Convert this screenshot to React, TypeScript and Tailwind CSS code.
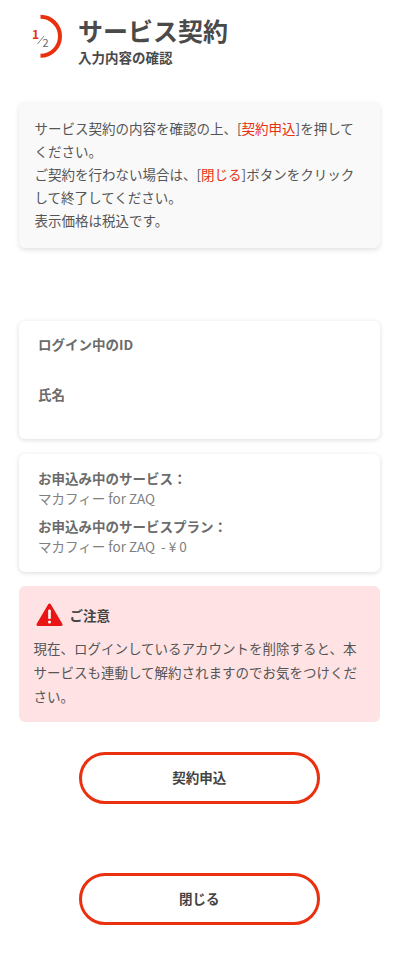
export default function App() {
  return (
    <div className="w-[400px] h-[967px] bg-white text-[#555] font-['Noto_Sans_CJK_JP','Noto_Sans',sans-serif] overflow-hidden">
      <header className="flex items-start pl-[31px] pt-[14px] h-[102px]">
        <div className="relative w-[33px] h-[46px]">
          <svg width="33" height="46" viewBox="0 0 33 46" className="block">
            <path d="M9.5 2.8 A 19.5 19.5 0 0 1 9.5 41.8" fill="none" stroke="#e9300f" strokeWidth="4" />
            <line x1="6.5" y1="30" x2="13" y2="22" stroke="#888" strokeWidth="1" />
          </svg>
          <span className="absolute left-[1px] top-[13px] text-[12px] leading-[14px] font-bold text-[#e9300f]">1</span>
          <span className="absolute left-[11.5px] top-[21px] text-[11px] leading-[14px] text-[#666]">2</span>
        </div>
        <div className="ml-[14px] -mt-[1px]">
          <h1 className="text-[25px] leading-[34px] font-bold text-[#4a4a4a]">サービス契約</h1>
          <p className="text-[13.5px] leading-[16px] mt-[2px] font-bold text-[#4a4a4a]">入力内容の確認</p>
        </div>
      </header>
      <main className="pl-[18.5px] pr-[20px]">
        <section className="bg-[#f9f9f9] rounded-md shadow-[0_2px_5px_rgba(0,0,0,0.12)] pl-[16px] pr-[16px] pt-[15px] text-[13.5px] leading-[23px] h-[146px]">
          <p>
            サービス契約の内容を確認の上、[<span className="text-[#e9300f]">契約申込</span>]を押してください。
            <br />
            ご契約を行わない場合は、[<span className="text-[#e9300f]">閉じる</span>]ボタンをクリックして終了してください。
            <br />
            表示価格は税込です。
          </p>
        </section>
        <section className="mt-[73px] h-[118px] bg-white rounded-md shadow-[0_1px_5px_rgba(0,0,0,0.14)] px-[19.5px] pt-[13px] text-[13.5px] font-bold text-[#6b6b6b]">
          <p className="leading-[20px]">ログイン中のID</p>
          <p className="leading-[20px] mt-[30px]">氏名</p>
        </section>
        <section className="mt-[15px] h-[118px] bg-white rounded-md shadow-[0_1px_5px_rgba(0,0,0,0.14)] px-[19.5px] pt-[14px] text-[13.5px] text-[#6b6b6b]">
          <p className="font-bold leading-[20px]">お申込み中のサービス：</p>
          <p className="leading-[20px] text-[#808080]">マカフィー for ZAQ</p>
          <p className="font-bold leading-[20px] mt-[8px]">お申込み中のサービスプラン：</p>
          <p className="leading-[20px] text-[#808080] whitespace-pre">マカフィー for ZAQ  - ¥ 0</p>
        </section>
        <section className="mt-[14px] h-[136px] bg-[#ffe3e4] rounded-md px-[15px] pt-[17px] text-[13.5px]">
          <div className="flex items-center h-[24px] pl-[2px]">
            <svg width="27" height="24" viewBox="0 0 27 24" className="block">
              <path d="M13.5 2 L25 21.5 H2 Z" fill="#ea1515" stroke="#ea1515" strokeWidth="3" strokeLinejoin="round" />
              <rect x="12.2" y="6.5" width="2.6" height="9.5" rx="1" fill="#fff" />
              <circle cx="13.5" cy="19" r="1.5" fill="#fff" />
            </svg>
            <span className="ml-[7px] text-[13.5px] font-bold text-[#444]">ご注意</span>
          </div>
          <p className="mt-[9px] leading-[24px] text-[#555]">現在、ログインしているアカウントを削除すると、本サービスも連動して解約されますのでお気をつけください。</p>
        </section>
        <div className="mt-[29.5px] flex flex-col items-center gap-[69px]">
          <button className="w-[241px] h-[52px] rounded-full border-[3px] border-[#e9300f] bg-white text-[13.5px] font-bold text-[#444]">契約申込</button>
          <button className="w-[241px] h-[52px] rounded-full border-[3px] border-[#e9300f] bg-white text-[13.5px] font-bold text-[#444]">閉じる</button>
        </div>
      </main>
    </div>
  );
}
